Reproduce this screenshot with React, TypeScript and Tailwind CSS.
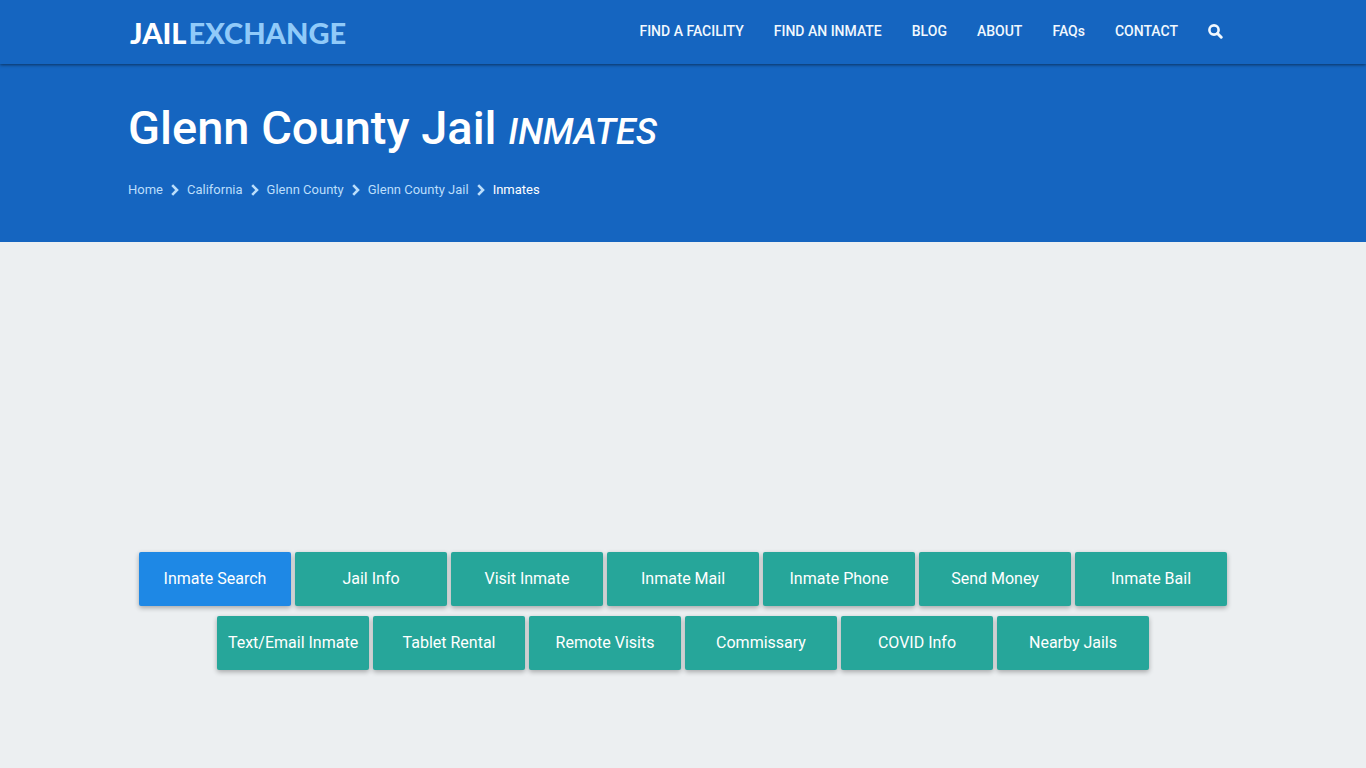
interface NavItem {
  label: string;
  href: string;
}

const navItems: NavItem[] = [
  { label: 'FIND A FACILITY', href: '#facility' },
  { label: 'FIND AN INMATE', href: '#inmate' },
  { label: 'BLOG', href: '#blog' },
  { label: 'ABOUT', href: '#about' },
  { label: 'FAQs', href: '#faqs' },
  { label: 'CONTACT', href: '#contact' },
];

const crumbs: NavItem[] = [
  { label: 'Home', href: '#home' },
  { label: 'California', href: '#california' },
  { label: 'Glenn County', href: '#glenn-county' },
  { label: 'Glenn County Jail', href: '#glenn-county-jail' },
];

const sections = [
  'Inmate Search',
  'Jail Info',
  'Visit Inmate',
  'Inmate Mail',
  'Inmate Phone',
  'Send Money',
  'Inmate Bail',
  'Text/Email Inmate',
  'Tablet Rental',
  'Remote Visits',
  'Commissary',
  'COVID Info',
  'Nearby Jails',
];

function SearchIcon() {
  return (
    <svg width="15" height="15" viewBox="0 0 15 15" fill="none" stroke="currentColor" aria-hidden="true">
      <circle cx="6" cy="6" r="4.6" strokeWidth="2.6" />
      <path d="M9.5 9.5L13.2 13.2" strokeWidth="3" strokeLinecap="round" />
    </svg>
  );
}

function Chevron() {
  return (
    <svg width="8" height="12" viewBox="0 0 8 12" fill="none" stroke="currentColor" className="mx-2" aria-hidden="true">
      <path d="M1.2 1.2L6 6L1.2 10.8" strokeWidth="2.6" />
    </svg>
  );
}

function Header() {
  return (
    <header className="relative bg-[#1565c0] shadow-[0_1px_3px_rgba(0,0,0,0.5)]">
      <div className="max-w-[1110px] mx-auto h-16 flex justify-between items-center">
        <a
          href="#home"
          className="pl-0.5 pt-0.5 text-[29px] leading-8 font-black text-white font-[Lato,sans-serif]"
        >
          JAIL<span className="ml-0.5 text-[#90caf9]">EXCHANGE</span>
        </a>
        <nav className="flex items-center pb-0.5 text-sm font-medium text-[#f1f8fe]">
          {navItems.map(item => (
            <a key={item.label} href={item.href} className="px-[15px] hover:text-white">
              {item.label}
            </a>
          ))}
          <button type="button" aria-label="Search" className="px-[15px] hover:text-white">
            <SearchIcon />
          </button>
        </nav>
      </div>
    </header>
  );
}

function PageTitle() {
  return (
    <div className="bg-[#1565c0] pt-8 pb-[42px]">
      <div className="max-w-[1110px] mx-auto">
        <h1 className="text-[47px] leading-16 font-medium text-white">
          Glenn County Jail <em className="text-4xl">INMATES</em>
        </h1>
        <nav aria-label="Breadcrumb" className="mt-5 flex items-center text-[13px] leading-5 text-[#bbdefb]">
          {crumbs.map(crumb => (
            <span key={crumb.label} className="flex items-center">
              <a href={crumb.href} className="hover:text-white">{crumb.label}</a>
              <Chevron />
            </span>
          ))}
          <span className="text-white">Inmates</span>
        </nav>
      </div>
    </div>
  );
}

export default function App() {
  return (
    <div className="min-h-screen bg-[#eceff1] font-[Roboto,sans-serif]">
      <Header />
      <PageTitle />

      <main className="max-w-[1110px] mx-auto pt-[310px] pb-24">
        <div className="flex flex-wrap justify-center gap-x-1 gap-y-2.5">
          {sections.map((label, i) => (
            <a
              key={label}
              href={`#section-${i}`}
              className={`w-[152px] h-[54px] flex items-center justify-center rounded-xs text-base text-white shadow-[0_2px_5px_rgba(0,0,0,0.3)] ${i === 0 ? 'bg-[#1e88e5]' : 'bg-[#26a69a]'}`}
            >
              {label}
            </a>
          ))}
        </div>
      </main>
    </div>
  );
}
